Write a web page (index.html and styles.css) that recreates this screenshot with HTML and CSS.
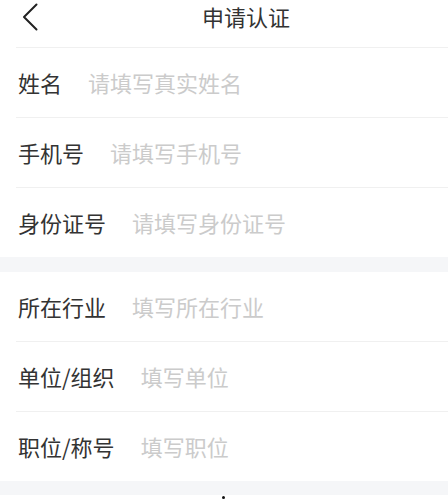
FILE: index.html
```html
<!DOCTYPE html>
<html lang="zh-CN">
<head>
<meta charset="utf-8">
<title>申请认证</title>
<link rel="stylesheet" href="styles.css">
</head>
<body>
<header class="header">
  <svg class="back" width="16" height="28" viewBox="0 0 16 28" aria-hidden="true">
    <path d="M14.5 1.5 L2 14 L14.5 26.5" fill="none" stroke="#222" stroke-width="2" stroke-linecap="round" stroke-linejoin="round"/>
  </svg>
  <h1 class="title">申请认证</h1>
</header>
<section class="group">
  <div class="row"><span class="label">姓名</span><span class="ph">请填写真实姓名</span></div>
  <div class="row"><span class="label">手机号</span><span class="ph">请填写手机号</span></div>
  <div class="row"><span class="label">身份证号</span><span class="ph">请填写身份证号</span></div>
</section>
<div class="band"></div>
<section class="group second">
  <div class="row"><span class="label">所在行业</span><span class="ph">填写所在行业</span></div>
  <div class="row"><span class="label">单位/组织</span><span class="ph">填写单位</span></div>
  <div class="row"><span class="label">职位/称号</span><span class="ph">填写职位</span></div>
</section>
<div class="band band-bottom"></div>
<div class="footer"><span class="dot"></span></div>
</body>
</html>
```
FILE: styles.css
```css
html, body {
  margin: 0;
  padding: 0;
  background: #ffffff;
}
body {
  font-family: "Noto Sans CJK SC", "Noto Sans", sans-serif;
  color: #333333;
  overflow: hidden;
}
.header {
  height: 47px;
  display: flex;
  align-items: flex-start;
}
.back {
  margin-left: 22px;
  margin-top: 3px;
  flex: none;
}
.title {
  margin: 0 0 0 164px;
  font-size: 22px;
  font-weight: 400;
  line-height: 32px;
  color: #333333;
}
.row {
  height: 67px;
  padding-bottom: 2px;
  margin-left: 16px;
  padding-left: 2px;
  border-top: 1px solid #f0f0f0;
  display: flex;
  align-items: center;
  font-size: 22px;
}
.second .row:first-child {
  border-top: none;
}
.label {
  color: #333333;
  margin-right: 26px;
  white-space: nowrap;
}
.ph {
  color: #cbcbcb;
  white-space: nowrap;
}
.band {
  height: 15px;
  background: #f5f6f8;
}
.band-bottom {
  height: 14px;
}
.footer {
  display: flex;
  justify-content: center;
  padding-top: 1px;
  padding-right: 1px;
}
.dot {
  width: 3px;
  height: 3px;
  border-radius: 50%;
  background: #111111;
}
```
